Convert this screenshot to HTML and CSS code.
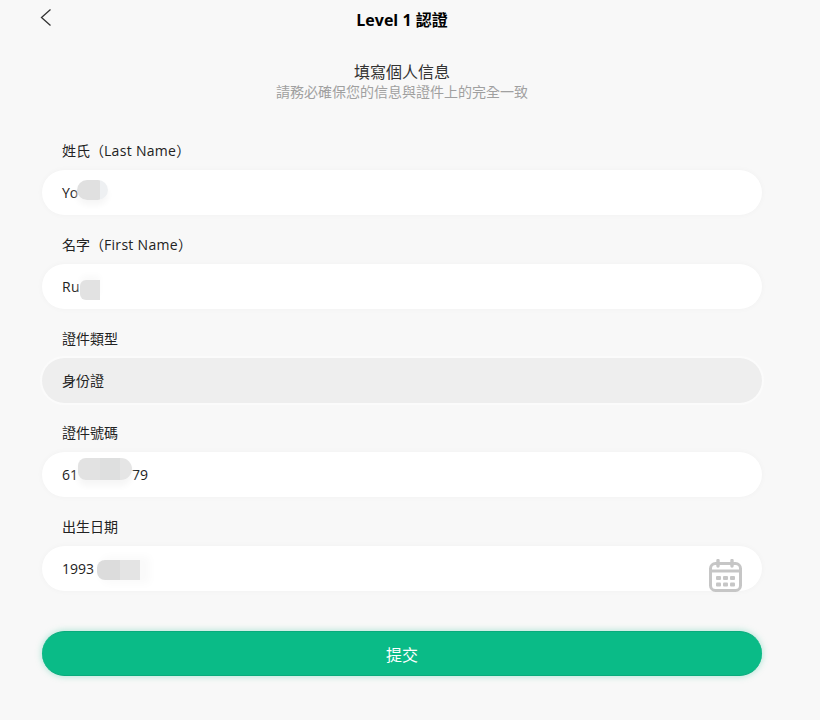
FILE: index.html
```html
<!DOCTYPE html>
<html lang="zh-Hant">
<head>
  <meta charset="UTF-8" />
  <meta name="viewport" content="width=device-width, initial-scale=1" />
  <title>Level 1 認證</title>
  <link rel="stylesheet" href="styles.css">
</head>
<body>
  <div class="page">
    <header class="top-bar">
      <button class="back-btn" aria-label="返回">
        <svg width="14" height="20" viewBox="0 0 14 20" fill="none" stroke="#333" stroke-width="1.3"><path d="M11.5 1.5 L2.5 9.5 L11.5 17.5"/></svg>
      </button>
      <h1>Level 1 認證</h1>
    </header>

    <div class="intro">
      <h2>填寫個人信息</h2>
      <p>請務必確保您的信息與證件上的完全一致</p>
    </div>

    <form class="form">
      <div class="field">
        <label>姓氏（<span class="en">Last Name</span>）</label>
        <div class="input">
          <span>Yo</span>
          <i class="smudge smudge-last"></i>
        </div>
      </div>
      <div class="field">
        <label>名字（<span class="en">First Name</span>）</label>
        <div class="input">
          <span class="en">Ru</span>
          <i class="smudge smudge-first"></i>
        </div>
      </div>
      <div class="field">
        <label>證件類型</label>
        <div class="input input-disabled"><span>身份證</span></div>
      </div>
      <div class="field">
        <label>證件號碼</label>
        <div class="input">
          <span>61<b class="gap"></b>79</span>
          <i class="smudge smudge-id"></i>
        </div>
      </div>
      <div class="field">
        <label>出生日期</label>
        <div class="input">
          <span>1993</span>
          <i class="smudge smudge-date"></i>
          <svg class="calendar" width="34" height="34" viewBox="0 0 34 34" fill="none">
            <rect x="1.5" y="4.5" width="30" height="27" rx="5" stroke="#c6c6c6" stroke-width="3"/>
            <path d="M1.5 12 H31.5" stroke="#c6c6c6" stroke-width="3"/>
            <path d="M9 1.5 V7 M23 1.5 V7" stroke="#c6c6c6" stroke-width="3.4" stroke-linecap="round"/>
            <g fill="#c6c6c6">
              <rect x="7" y="17" width="5" height="4" rx="1"/>
              <rect x="14" y="17" width="5" height="4" rx="1"/>
              <rect x="21" y="17" width="5" height="4" rx="1"/>
              <rect x="7" y="23.5" width="5" height="4" rx="1"/>
              <rect x="14" y="23.5" width="5" height="4" rx="1"/>
              <rect x="21" y="23.5" width="5" height="4" rx="1"/>
            </g>
          </svg>
        </div>
      </div>
      <button class="submit-btn" type="button">提交</button>
    </form>
  </div>
</body>
</html>
```

FILE: styles.css
```css
* {
  box-sizing: border-box;
  margin: 0;
  padding: 0;
}

html, body {
  height: 100%;
}

body {
  background: #f8f8f8;
  color: #222;
  font-family: "Open Sans", "Noto Sans CJK TC", sans-serif;
  font-size: 14px;
  overflow: hidden;
}

.page {
  width: 804px;
  padding: 0 42px;
}

/* Top bar */
.top-bar {
  position: relative;
  height: 40px;
  padding-bottom: 3px;
  display: flex;
  align-items: center;
  justify-content: center;
}

.top-bar h1 {
  font-size: 16px;
  font-weight: 700;
  color: #000;
}

.back-btn {
  position: absolute;
  left: -3px;
  top: 8px;
  background: transparent;
  border: none;
}

/* Intro */
.intro {
  margin-top: 21px;
  text-align: center;
}

.intro h2 {
  font-size: 16px;
  font-weight: 400;
  line-height: 22px;
  color: #333;
}

.intro p {
  font-size: 14px;
  line-height: 18px;
  color: #a0a0a0;
}

/* Form */
.form {
  margin-top: 34px;
}

.field {
  margin-bottom: 14px;
}

.field label {
  display: block;
  height: 35px;
  padding: 0 20px;
  line-height: 32px;
  color: #222;
}

.en {
  letter-spacing: 0.3px;
}

.input {
  position: relative;
  height: 45px;
  padding: 0 20px;
  display: flex;
  align-items: center;
  background: #fff;
  border-radius: 23px;
  box-shadow: 0 0 6px rgba(0,0,0,0.03);
  line-height: 22px;
}

.input-disabled {
  background: #eee;
  box-shadow: 0 0 0 2px #fbfbfb;
}

.gap {
  display: inline-block;
  width: 54px;
}

/* Redacted parts of the values */
.smudge {
  position: absolute;
  height: 20px;
}

.smudge-last {
  left: 35px;
  top: 10px;
  width: 31px;
  border-radius: 10px;
  background: linear-gradient(90deg, #e0e0e0 74%, #eef0f2 74%);
  box-shadow: 0 5px 6px #f6f6f6;
}

.smudge-first {
  left: 38px;
  top: 16px;
  width: 20px;
  border-radius: 6px 0 0 6px;
  background: #e2e2e2;
  box-shadow: 0 -5px 6px #fafafa;
}

.smudge-id {
  left: 36px;
  top: 6px;
  width: 54px;
  height: 22px;
  border-radius: 10px 14px 14px 10px;
  background: linear-gradient(90deg, #e2e2e2 41%, #dedfdf 41%, #dedfdf 78%, #e5e5e5 78%);
  box-shadow: 0 6px 6px #f6f6f6;
}

.smudge-date {
  left: 55px;
  top: 14px;
  width: 43px;
  border-radius: 8px 0 0 8px;
  background: linear-gradient(90deg, #dcdcdc 53%, #e4e4e4 53%);
  box-shadow: 6px 0 8px 4px #fafafa;
}

.calendar {
  position: absolute;
  right: 19px;
  top: 13px;
}

/* Submit */
.submit-btn {
  display: block;
  width: 100%;
  height: 45px;
  margin-top: 40px;
  background: #0abb87;
  border: none;
  border-top: 1px solid #09ab7c;
  border-bottom: 1px solid #09ab7c;
  border-radius: 23px;
  box-shadow: 0 0 7px rgba(10,187,135,0.35);
  color: #fff;
  font-family: inherit;
  font-size: 16px;
}
```
